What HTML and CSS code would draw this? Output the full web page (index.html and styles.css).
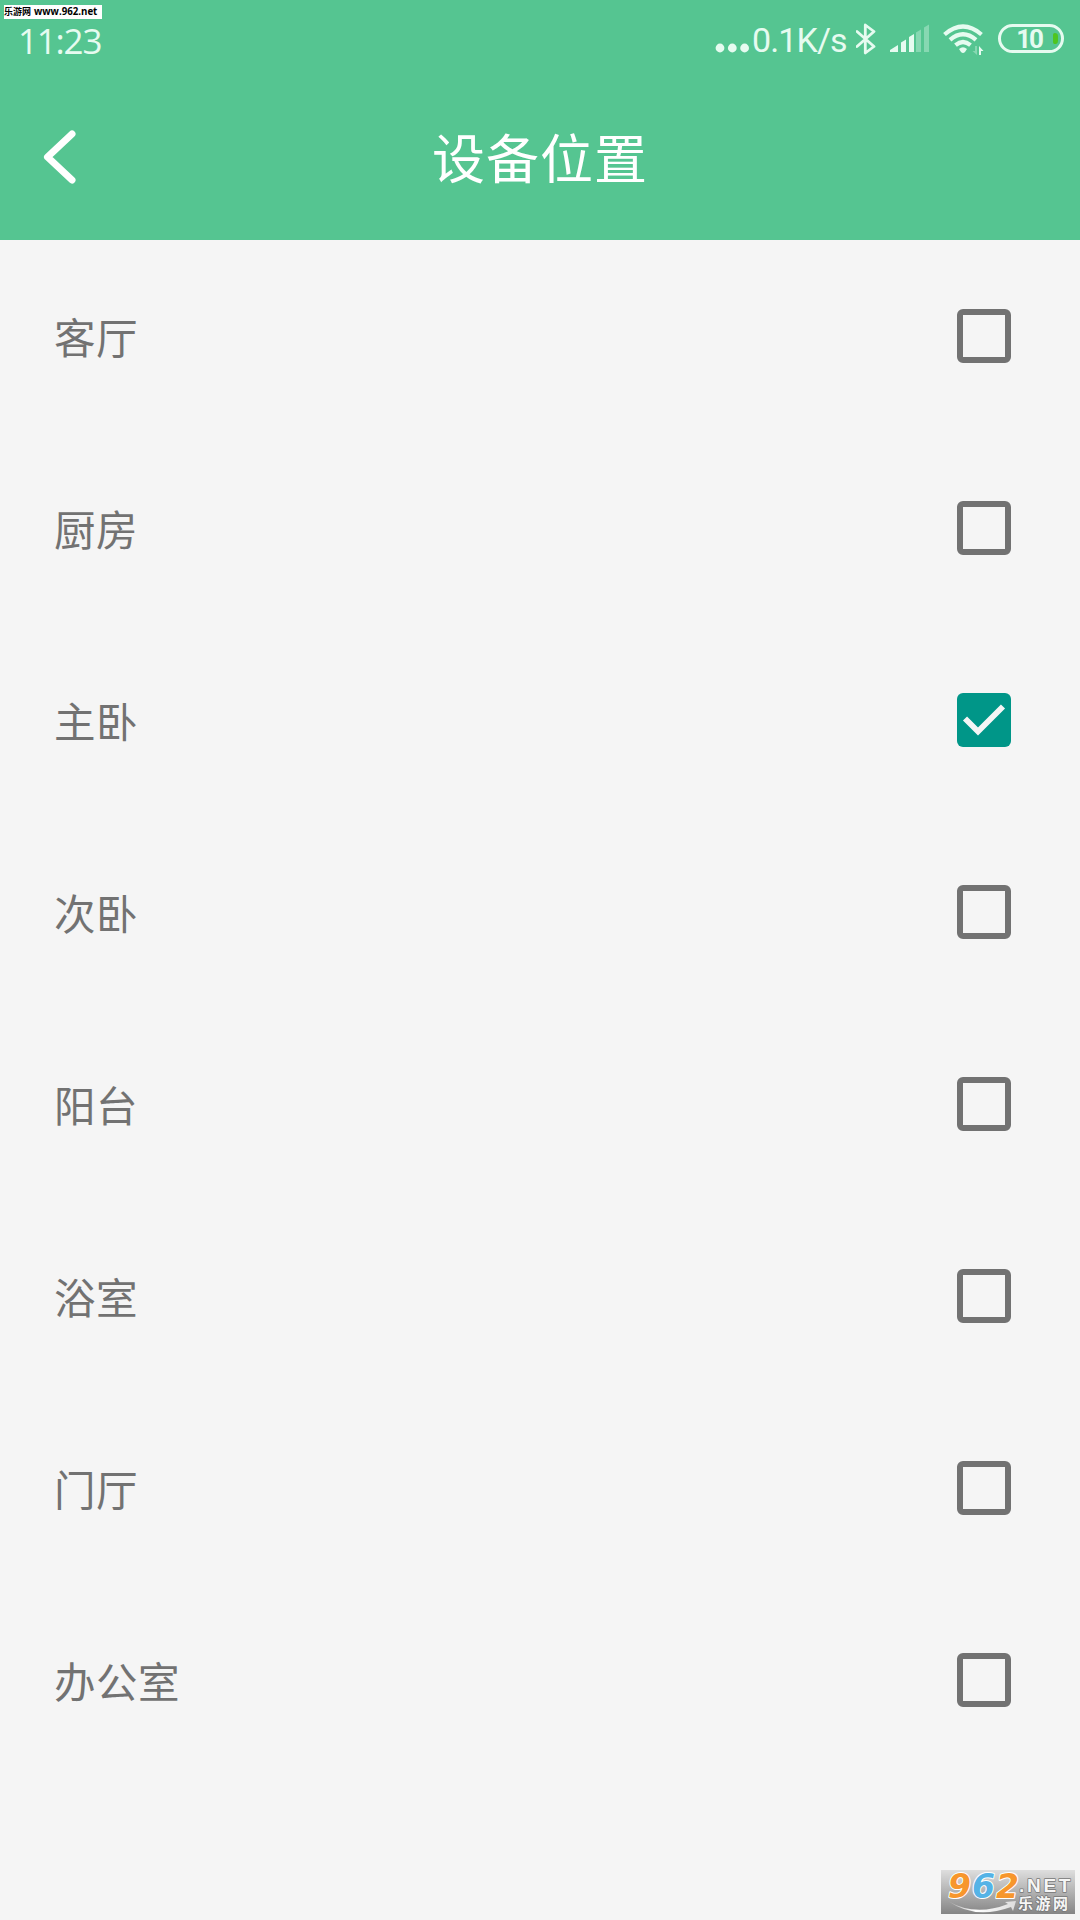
FILE: index.html
```html
<!DOCTYPE html>
<html lang="zh-CN">
    <head>
        <meta charset="UTF-8">
        <title>设备位置</title>
        <link rel="stylesheet" href="styles.css">
    </head>

    <body>
        <div class="site-tag"><span class="site-tag-name">乐游网</span><span class="site-tag-url">www.962.net</span></div>

        <header class="header">
            <div class="status-bar">
                <span class="clock">11:23</span>
                <div class="status-right">
                    <svg class="dots" width="37" height="12" viewBox="0 0 37 12">
                        <circle cx="5" cy="6" r="4.4"/><circle cx="17.3" cy="6" r="4.4"/><circle cx="29.6" cy="6" r="4.4"/>
                    </svg>
                    <span class="speed">0.1K/s</span>
                    <svg class="bluetooth" width="20" height="34" viewBox="0 0 20 34">
                        <path d="M1 9.5 18 24.5 9.3 31V3L18 9.5 1 24.5"/>
                    </svg>
                    <svg class="signal" width="39" height="28" viewBox="0 0 39 28">
                        <path d="M0 28V26L8 21V28ZM11 28V18.5L16 15.5V28ZM19 28V13L24 10V28Z"/>
                        <path class="faint" d="M26 28V8.5L31 5.5V28ZM34 28V3.5L39 .5V28Z"/>
                    </svg>
                    <svg class="wifi" width="41" height="32" viewBox="0 0 41 32">
                        <g class="waves">
                            <path d="M1.5 10.5Q20 -5.5 38.5 10.5"/>
                            <path d="M7 15.9Q20 4.7 33 15.9"/>
                            <path d="M12.5 21.2Q20 14.9 27.5 21.2"/>
                        </g>
                        <path d="M16 25Q20 21.5 24 25L22 28Q20 30 18 28Z"/>
                        <path class="faint" d="M34 22V31L29.5 27H32V22Z"/>
                        <path d="M36 31V22L40.5 27H38V31Z"/>
                    </svg>
                    <div class="battery"><span class="battery-level">10</span><span class="battery-charge"></span></div>
                </div>
            </div>
            <div class="title-bar">
                <svg class="back" width="34" height="54" viewBox="0 0 34 54">
                    <path d="M29 4 4.5 27 29 50"/>
                </svg>
                <h1 class="title">设备位置</h1>
            </div>
        </header>

        <ul class="location-list">
            <li class="location"><span class="name">客厅</span><span class="checkbox"></span></li>
            <li class="location"><span class="name">厨房</span><span class="checkbox"></span></li>
            <li class="location">
                <span class="name">主卧</span>
                <span class="checkbox checked">
                    <svg width="54" height="54" viewBox="0 0 54 54"><path d="M8 25.5 21 38.5 46 13.5"/></svg>
                </span>
            </li>
            <li class="location"><span class="name">次卧</span><span class="checkbox"></span></li>
            <li class="location"><span class="name">阳台</span><span class="checkbox"></span></li>
            <li class="location"><span class="name">浴室</span><span class="checkbox"></span></li>
            <li class="location"><span class="name">门厅</span><span class="checkbox"></span></li>
            <li class="location"><span class="name">办公室</span><span class="checkbox"></span></li>
        </ul>

        <div class="watermark">
            <svg width="134" height="44" viewBox="0 0 134 44">
                <defs>
                    <linearGradient id="swoosh" x1="0" x2="1">
                        <stop offset="0" stop-color="#aaa"/>
                        <stop offset=".4" stop-color="#fff"/>
                        <stop offset="1" stop-color="#ddd"/>
                    </linearGradient>
                </defs>
                <path class="swoosh" d="M7 31Q34 47 67 34L64 32 75 31 72 41 70 37Q34 50 7 31Z"/>
                <text class="big-digits" x="7" y="28"><tspan class="orange">9</tspan><tspan class="blue">6</tspan><tspan class="orange">2</tspan></text>
                <text class="net" x="78" y="22">.NET</text>
                <text class="site-name" x="77" y="39">乐游网</text>
            </svg>
        </div>
    </body>
</html>
```
FILE: styles.css
```css
body {
    margin: 0;
    height: 1920px;
    background-color: #f5f5f5;
    color: #727272;
    font-family: Roboto, "Noto Sans CJK SC", sans-serif;
    overflow: hidden;
}

.header {
    height: 240px;
    background-color: #55c591;
    color: white;
}

.status-bar {
    display: flex;
    justify-content: space-between;
    height: 80px;
    padding: 0 16px 0 18px;
    color: #e6fbf0;
    fill: #e6fbf0;
    font-size: 34px;
    line-height: 81px;
}

.clock {
    font-family: "Open Sans", sans-serif;
    font-size: 35px;
    letter-spacing: -1.2px;
}

.status-right {
    display: flex;
    align-items: flex-start;
}

.dots {
    margin-top: 42px;
}

.speed {
    width: 94px;
    margin-right: 10px;
    letter-spacing: -.9px;
    white-space: nowrap;
}

.bluetooth {
    margin: 22px 14px 0 0;
    fill: none;
    stroke: #e6fbf0;
    stroke-width: 2.8;
    stroke-linejoin: round;
    stroke-linecap: round;
}

.signal {
    margin: 24px 14px 0 0;
}

.faint {
    opacity: .35;
}

.wifi {
    margin: 24px 14px 0 0;
}

.waves {
    fill: none;
    stroke: #e6fbf0;
    stroke-width: 4.2;
}

.battery {
    display: flex;
    align-items: center;
    justify-content: flex-end;
    box-sizing: border-box;
    width: 66px;
    height: 29px;
    margin-top: 24px;
    padding-right: 3px;
    border: 3px solid #e6fbf0;
    border-radius: 15px;
}

.battery-level {
    margin-right: 11px;
    padding-top: 1px;
    font-size: 26px;
    font-weight: bold;
    line-height: 23px;
    letter-spacing: -2px;
}

.battery-charge {
    width: 5px;
    height: 11px;
    border-radius: 2px 4px 4px 2px;
    background-color: #4fc51f;
}

.title-bar {
    display: grid;
    grid-template-columns: 80px 1fr 80px;
    align-items: center;
    height: 160px;
    padding: 0 40px;
    box-sizing: border-box;
}

.back {
    margin-top: -7px;
    margin-left: 3px;
    fill: none;
    stroke: white;
    stroke-width: 7;
    stroke-linecap: round;
    stroke-linejoin: round;
}

.title {
    margin: 1px 0 0;
    font-size: 53px;
    font-weight: normal;
    letter-spacing: 1px;
    line-height: 80px;
    text-align: center;
}

.location-list {
    margin: 0;
    padding: 0;
    list-style: none;
}

.location {
    display: flex;
    align-items: center;
    justify-content: space-between;
    height: 192px;
    padding: 0 69px 0 54px;
    font-size: 41.5px;
    letter-spacing: .5px;
}

.name {
    padding-bottom: 1px;
}

.checkbox {
    box-sizing: border-box;
    width: 54px;
    height: 54px;
    border: 6px solid #727272;
    border-radius: 6px;
}

.checked {
    border: 0;
    background-color: #009688;
}

.checked svg {
    display: block;
    fill: none;
    stroke: #f5f5f5;
    stroke-width: 5.8;
}

/* site tag and logo lie over the screen corners */
.site-tag {
    position: absolute;
    top: 5px;
    left: 4px;
    display: flex;
    gap: 3px;
    width: 98px;
    height: 14px;
    background-color: white;
    color: black;
    font-family: "Open Sans", "Noto Sans CJK SC", sans-serif;
    font-size: 9px;
    font-weight: bold;
    line-height: 14px;
    white-space: nowrap;
}

.site-tag-url {
    font-size: 9.7px;
}

.watermark {
    position: absolute;
    left: 941px;
    top: 1870px;
    width: 134px;
    height: 44px;
    background: linear-gradient(#dedede, #858585);
}

.watermark svg {
    display: block;
    overflow: visible;
}

.watermark text {
    font-family: "Liberation Sans", "Noto Sans CJK SC", sans-serif;
    font-weight: bold;
    paint-order: stroke;
    stroke-linejoin: round;
}

.watermark .big-digits {
    font-family: "DejaVu Sans", sans-serif;
    font-size: 33px;
    font-style: italic;
    letter-spacing: 1px;
    stroke: white;
    stroke-width: 2;
}

.orange {
    fill: #f7962c;
}

.blue {
    fill: #55b3e6;
}

.net,
.site-name {
    fill: #f6f6f6;
    stroke: #777;
    stroke-width: 1.5;
}

.net {
    font-size: 19px;
    letter-spacing: 2.7px;
}

.site-name {
    font-size: 15px;
    letter-spacing: 2.5px;
}

.swoosh {
    fill: url(#swoosh);
}
```
